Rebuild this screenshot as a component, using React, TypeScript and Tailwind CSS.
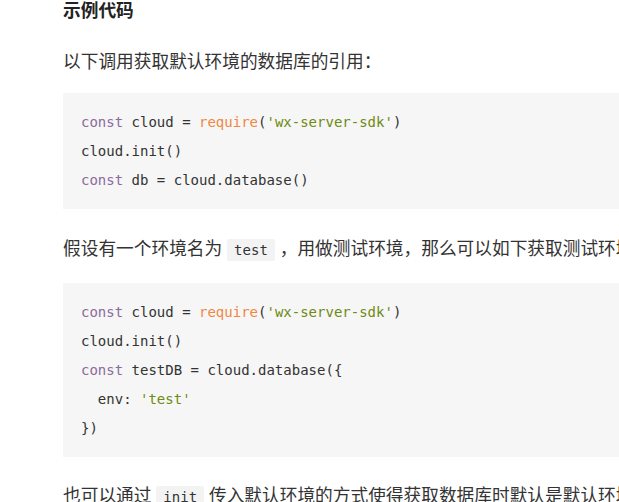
const kw = 'text-[#8a6b9c]';
const fn = 'text-[#f0873f]';
const str = 'text-[#6f8a12]';

function Code({ children }: { children: React.ReactNode }) {
    return (
        <code className="rounded-[2px] bg-[#f3f3f3] px-[7px] py-[3px] font-['DejaVu_Sans_Mono','Liberation_Mono',monospace] text-[14px] text-[#333]">
            {children}
        </code>
    );
}

function CodeBlock({ lines }: { lines: React.ReactNode[] }) {
    return (
        <pre className="bg-[#f6f6f6] pl-[18px] pt-[15px] pb-[14px] font-['DejaVu_Sans_Mono','Liberation_Mono',monospace] text-[14px] leading-[29px] text-[#333]">
            {lines.map((l, i) => (
                <div key={i}>{l}</div>
            ))}
        </pre>
    );
}

export default function App() {
    return (
        <div className="h-[502px] w-[619px] overflow-hidden bg-white">
            <div className="ml-[63px] w-[700px] whitespace-nowrap font-['Liberation_Sans','Noto_Sans_CJK_SC',sans-serif] text-[17.7px] text-[#333]">
                <h3 className="text-[17.7px] font-bold leading-[22px] text-[#222]">示例代码</h3>

                <p className="mt-[26px] leading-[28px]">以下调用获取默认环境的数据库的引用：</p>

                <div className="mt-[17px]">
                    <CodeBlock
                        lines={[
                            <>
                                <span className={kw}>const</span> cloud = <span className={fn}>require</span>(
                                <span className={str}>'wx-server-sdk'</span>)
                            </>,
                            <>cloud.init()</>,
                            <>
                                <span className={kw}>const</span> db = cloud.database()
                            </>,
                        ]}
                    />
                </div>

                <p className="mt-[26px] leading-[28px]">
                    假设有一个环境名为 <Code>test</Code> ，用做测试环境，那么可以如下获取测试环境的数据库的引用：
                </p>

                <div className="mt-[19px]">
                    <CodeBlock
                        lines={[
                            <>
                                <span className={kw}>const</span> cloud = <span className={fn}>require</span>(
                                <span className={str}>'wx-server-sdk'</span>)
                            </>,
                            <>cloud.init()</>,
                            <>
                                <span className={kw}>const</span> testDB = cloud.database({'{'}
                            </>,
                            <>
                                {'  '}env: <span className={str}>'test'</span>
                            </>,
                            <>{'})'}</>,
                        ]}
                    />
                </div>

                <p className="mt-[25px] leading-[28px]">
                    也可以通过 <Code>init</Code> 传入默认环境的方式使得获取数据库时默认是默认环境的数据库：
                </p>
            </div>
        </div>
    );
}
